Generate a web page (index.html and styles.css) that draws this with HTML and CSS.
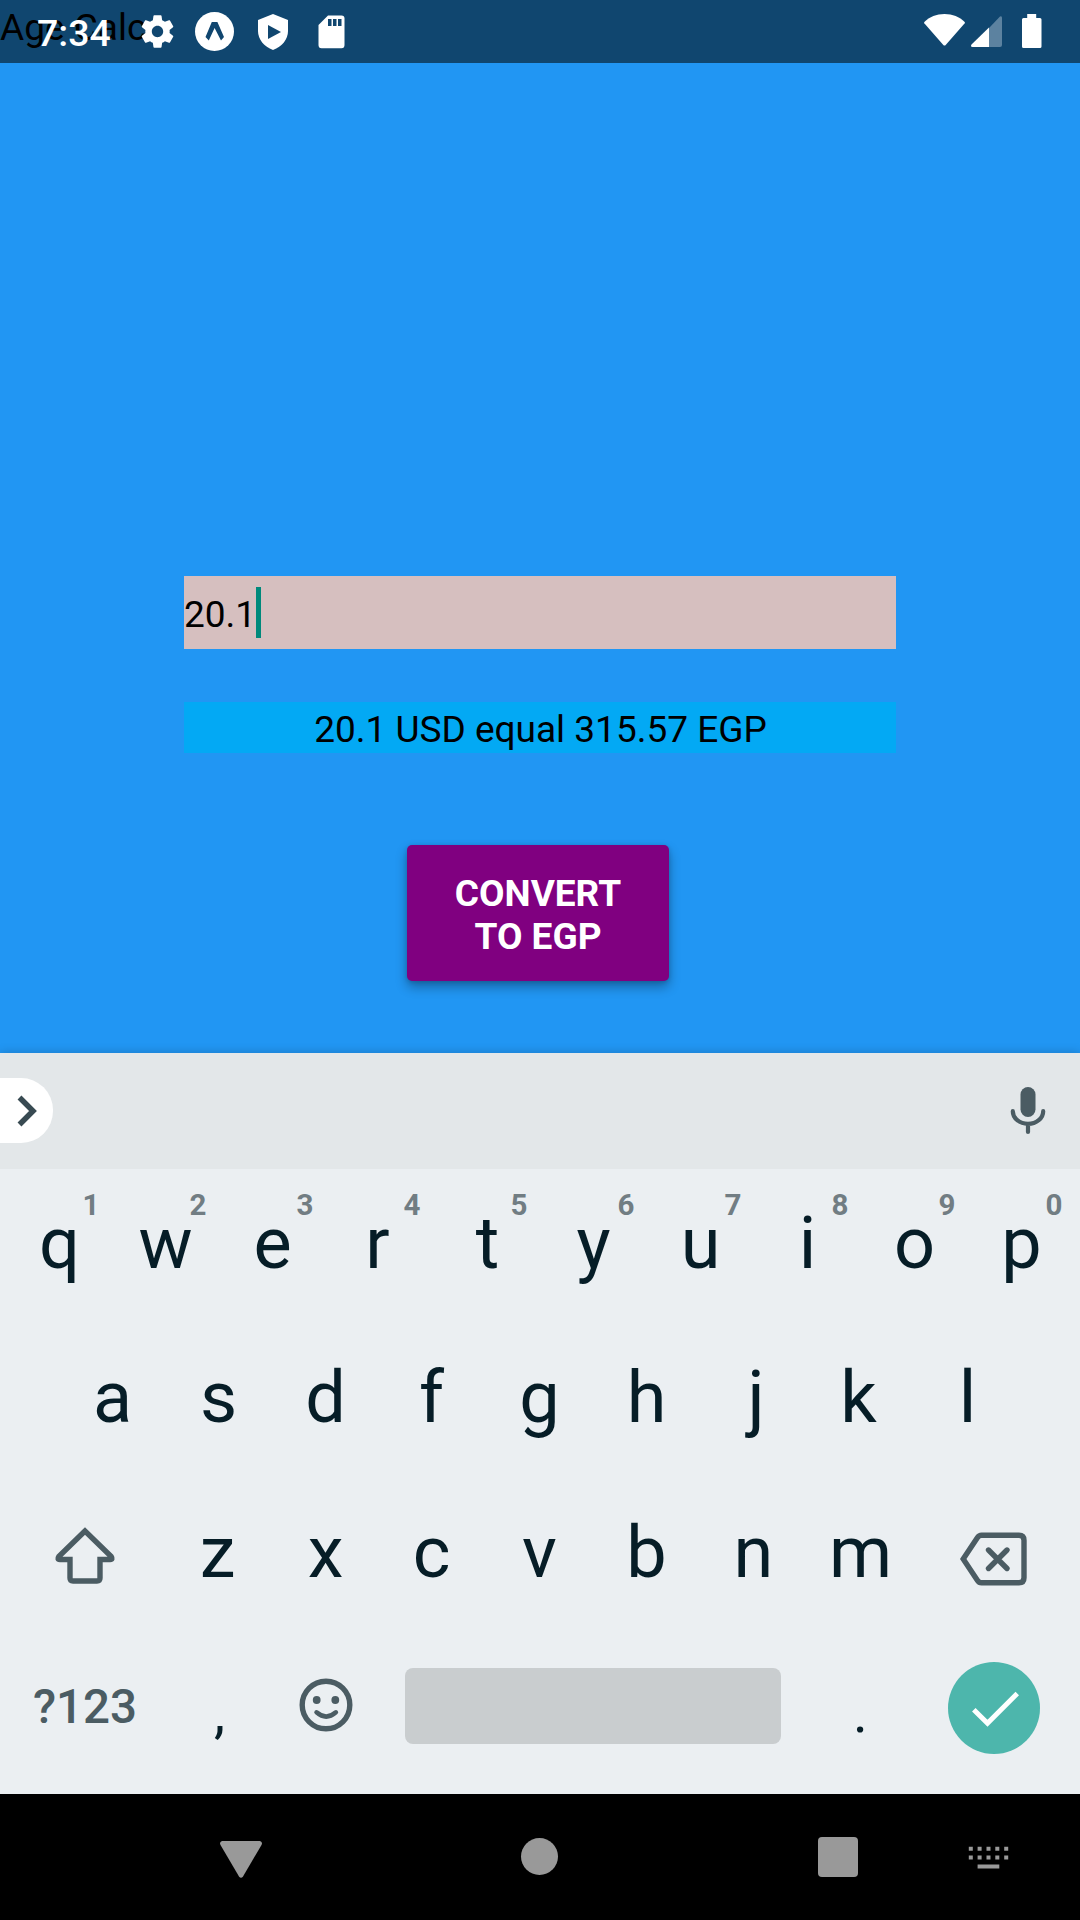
FILE: index.html
```html
<!DOCTYPE html>
<html lang="en">
<head>
<meta charset="utf-8">
<title>Age Calc</title>
<link rel="stylesheet" href="styles.css">
</head>
<body>
<div class="screen">
  <header class="status">
    <span class="time">7:34</span>
    <svg class="gear" width="39" height="39" viewBox="0 0 24 24"><path d="M19.43 12.98c.04-.32.07-.64.07-.98s-.03-.66-.07-.98l2.11-1.65c.19-.15.24-.42.12-.64l-2-3.46c-.12-.22-.39-.3-.61-.22l-2.49 1c-.52-.4-1.08-.73-1.69-.98l-.38-2.65C14.46 2.18 14.25 2 14 2h-4c-.25 0-.46.18-.49.42l-.38 2.65c-.61.25-1.17.59-1.69.98l-2.49-1c-.23-.09-.49 0-.61.22l-2 3.46c-.13.22-.07.49.12.64l2.11 1.65c-.04.32-.07.65-.07.98s.03.66.07.98l-2.11 1.65c-.19.15-.24.42-.12.64l2 3.46c.12.22.39.3.61.22l2.49-1c.52.4 1.08.73 1.69.98l.38 2.65c.03.24.24.42.49.42h4c.25 0 .46-.18.49-.42l.38-2.65c.61-.25 1.17-.59 1.69-.98l2.49 1c.23.09.49 0 .61-.22l2-3.46c.12-.22.07-.49-.12-.64l-2.11-1.65zM12 15.5c-1.93 0-3.5-1.57-3.5-3.5s1.57-3.500 3.500-3.500 3.500 1.570 3.500 3.500-1.570 3.500-3.500 3.500z"/></svg>
    <svg class="expo" width="39" height="39" viewBox="0 0 39 39"><circle cx="19.5" cy="19.5" r="19.5"/><path class="cut" d="M16.800 10h5.600l6.600 15-3 3.500-6.400-12.500-5.800 12.500-3.300-3.500z"/></svg>
    <svg class="shield" width="30" height="36" viewBox="0 0 30 36"><path d="M15 0l15 6v11c0 8.500-6 15.500-15 19C6 32.500 0 25.500 0 17V6z"/><path class="cut" d="M10 11v14l13-7z"/></svg>
    <svg class="sd" width="27" height="34" viewBox="0 0 27 34"><path d="M10 .5h13.500c2 0 3 1.200 3 3v26.500c0 2-1 3.300-3 3.300H3.500c-2 0-3-1.300-3-3.300V10z"/><path class="cut" d="M10 4h3.500v7H10zM15 4h3.500v7H15zM20 4h3.500v7H20z"/></svg>
    <svg class="wifi" width="41" height="32" viewBox="0 0 41 32"><path d="M.3 8C5.500 3 12.500.1 20.500.1S35.500 3 40.700 8c.3.400.3.900 0 1.300L21.700 31c-.7.700-1.700.7-2.400 0L.3 9.300c-.3-.4-.3-.9 0-1.300z"/></svg>
    <svg class="signal" width="31" height="31" viewBox="0 0 31 31"><path class="faint" d="M18 12L29 .5q2-1 2 1.500v27q0 2-2 2H18z"/><path d="M18 11.500V31H1.500Q-.8 31 .5 28.500z"/></svg>
    <svg class="battery" width="20" height="34" viewBox="0 0 20 34"><path d="M5.200 0h9v4H18q1.500 0 1.500 1.500v27Q19.500 34 18 34H1.500Q0 34 0 32.500v-27Q0 4 1.500 4h3.700z"/></svg>
  </header>

  <main class="app">
    <div class="title">Age Calc</div>
    <div class="field"><span>20.1</span><i class="caret"></i></div>
    <div class="result">20.1 USD equal 315.57 EGP</div>
    <button class="convert">CONVERT<br>TO EGP</button>
  </main>

  <section class="keyboard">
    <div class="strip">
      <div class="expand"><svg width="20" height="32" viewBox="0 0 20 32"><path class="chevron" d="M2.500 2.500L16 16 2.500 29.500"/></svg></div>
      <svg class="mic" width="36" height="48" viewBox="0 0 36 48"><rect x="10.500" y="0" width="15" height="30" rx="7.500"/><path class="line" d="M2.800 24.200a15.200 12.700 0 0 0 30.400 0M18 38v7"/></svg>
    </div>
    <div class="row row-1">
      <div class="key key-q">q<sup>1</sup></div><div class="key">w<sup>2</sup></div><div class="key">e<sup>3</sup></div><div class="key key-r">r<sup>4</sup></div><div class="key key-t">t<sup>5</sup></div><div class="key">y<sup>6</sup></div><div class="key">u<sup>7</sup></div><div class="key">i<sup>8</sup></div><div class="key">o<sup>9</sup></div><div class="key">p<sup>0</sup></div>
    </div>
    <div class="row row-2">
      <div class="key key-a">a</div><div class="key">s</div><div class="key">d</div><div class="key key-f">f</div><div class="key">g</div><div class="key">h</div><div class="key key-j">j</div><div class="key key-k">k</div><div class="key">l</div>
    </div>
    <div class="row row-3">
      <div class="key wide"><svg class="shift" width="62" height="58" viewBox="0 0 62 58"><path class="stroke" d="M31 4L4.800 29.500q-2 3 1 3H16V51q0 3 3 3h24q3 0 3-3V32.500h10.200q3 0 1-3z"/></svg></div>
      <div class="key key-z">z</div><div class="key">x</div><div class="key key-c">c</div><div class="key">v</div><div class="key">b</div><div class="key">n</div><div class="key">m</div>
      <div class="key wide"><svg class="erase" width="68" height="54" viewBox="0 0 68 54"><path class="stroke" d="M3.200 27L17.500 5.500Q19 3.200 21.500 3.200H59q5 0 5 5v37.600q0 5-5 5H21.500Q19 50.800 17.500 48.500z"/><path class="stroke round" d="M28.500 18l18.500 18.500M47 18L28.500 36.500"/></svg></div>
    </div>
    <div class="row row-4">
      <div class="key wide symbols">?123</div>
      <div class="key punct comma">,</div>
      <div class="key"><svg class="smile" width="54" height="54" viewBox="0 0 54 54"><circle class="stroke" cx="27" cy="27" r="23.800"/><circle cx="17.700" cy="22" r="3.900"/><circle cx="36.300" cy="22" r="3.900"/><path class="mouth" d="M17.500 34.300q9.700 8.500 19.400 0"/></svg></div>
      <div class="space"></div>
      <div class="key punct">.</div>
      <div class="key wide"><div class="enter"><svg width="48" height="36" viewBox="0 0 48 36"><path class="tick" d="M2.800 18.800L16.500 32.300 46.300 2.500"/></svg></div></div>
    </div>
  </section>

  <nav class="nav">
    <svg class="back" width="42" height="37" viewBox="0 0 42 37"><path d="M2 0h38q3 1 1.500 4L23 35.500q-2 2.500-4 0L.5 4Q-1 1 2 0z"/></svg>
    <i class="home"></i>
    <i class="recent"></i>
    <svg class="ime" width="42" height="24" viewBox="0 0 42 24"><path d="M.8.800h4v4h-4zM9.600.8h4v4h-4zM18.500.8h4v4h-4zM27.300.8h4v4h-4zM36.200.8h4v4h-4zM.8 9.600h4v4h-4zM9.600 9.600h4v4h-4zM18.500 9.600h4v4h-4zM27.300 9.600h4v4h-4zM36.200 9.600h4v4h-4zM9.600 18.500h21.700v4H9.600z"/></svg>
  </nav>
</div>
</body>
</html>
```
FILE: styles.css
```css
* { box-sizing: border-box; }
body { margin: 0; font-family: Roboto, sans-serif; }
svg { display: block; flex: none; }
.screen { position: relative; display: flex; flex-direction: column; width: 1080px; height: 1920px; overflow: hidden; background: #2196f3; }

/* system bar drawn over the app */
.status { position: absolute; z-index: 1; top: 0; left: 0; display: flex; align-items: flex-start; width: 100%; height: 63px; padding-left: 37px; color: #fff; fill: #fff; }
.time { width: 101px; margin-top: 11px; font-size: 37.5px; font-weight: 500; line-height: 44px; }
.gear { margin-top: 12px; }
.expo { margin: 12px 0 0 18px; }
.shield { margin: 14px 0 0 24px; }
.sd { margin: 15px 0 0 30px; }
.wifi { margin: 14px 0 0 auto; }
.signal { margin: 16px 0 0 6px; }
.battery { margin: 14px 38px 0 20px; }
.cut { fill: #10466f; }
.faint { fill: #5c82a0; }

.app { display: flex; flex-direction: column; align-items: center; height: 1053px; color: #000; font-size: 37px; }
.title { align-self: stretch; height: 63px; padding-top: 6px; background: #10466f; line-height: 44px; }
.field { display: flex; align-items: center; width: 712px; height: 73px; margin-top: 513px; background: #d6bfbf; }
.field span { padding-top: 4px; }
.caret { width: 5px; height: 51px; background: #00897b; }
.result { width: 712px; height: 51px; margin-top: 53px; padding-left: 1px; background: #03a9f4; line-height: 55px; text-align: center; }
.convert { width: 262px; height: 136px; margin: 92px 4px 0 0; padding: 4px 0 0; border: 0; border-radius: 5px; background: #800080; box-shadow: 0 6px 12px rgba(0, 0, 0, .32), 0 1px 4px rgba(0, 0, 0, .15); color: #fff; font: 700 37px/43px Roboto, sans-serif; }

.keyboard { height: 741px; background: #ebeff2; box-shadow: 0 0 10px rgba(0, 0, 0, .2); color: #061d27; fill: #4b5c63; }
.strip { display: flex; justify-content: space-between; height: 116px; padding: 25px 34px 0 0; background: #e3e7e9; }
.expand { display: flex; align-items: center; width: 53px; height: 65px; padding-left: 17px; border-radius: 0 32px 32px 0; background: #fff; }
.chevron { fill: none; stroke: #384a52; stroke-width: 5.5; }
.mic { margin-top: 9px; }
.line { fill: none; stroke: #4b5c63; stroke-width: 4.200; stroke-linecap: round; }
.row { display: flex; align-items: stretch; padding: 0 5px; font-size: 72px; }
.row-1 { height: 149px; }
.row-2 { height: 159px; padding: 0 58px; }
.row-3 { height: 151px; }
.row-4 { height: 160px; }
.key { position: relative; display: flex; align-items: center; justify-content: center; width: 107px; flex: none; }
.key.wide { width: 160px; }
.key sup { position: absolute; top: 19px; left: 66px; width: 40px; color: #717d83; font-size: 29.500px; font-weight: 700; line-height: 35px; text-align: center; }

/* optical centring of narrow and asymmetric letters */
.key-q, .key-t, .key-a { padding-left: 2px; }
.key-r, .key-k { padding-right: 4px; }
.key-f, .key-z, .key-c { padding-right: 2px; }
.key-j { padding-left: 5px; }
.comma { padding-left: 2px; }

.stroke { fill: none; stroke: #4b5c63; stroke-width: 5.4; }
.round { stroke-linecap: round; }
.shift { margin-top: 6px; }
.erase { margin-top: 12px; }
.symbols { padding-bottom: 2px; color: #4b5c63; font-size: 47.500px; font-weight: 500; }
.punct { padding-top: 9px; font-size: 56px; }
.smile { margin-top: -6px; }
.mouth { fill: none; stroke: #4b5c63; stroke-width: 4.500; stroke-linecap: round; }
.space { width: 376px; height: 76px; margin: 40px 26px 0; border-radius: 8px; background: #c9cdcf; }
.enter { display: flex; align-items: center; justify-content: center; width: 92px; height: 92px; padding: 2px 0 0 2px; border-radius: 50%; background: #4db6ac; }
.tick { fill: none; stroke: #fff; stroke-width: 5; }

.nav { display: flex; align-items: flex-start; height: 126px; padding: 43px 70px 0 220px; background: #000; fill: #999; }
.back { margin-top: 4px; }
.home { width: 37px; height: 37px; margin: 1px 0 0 259px; border-radius: 50%; background: #999; }
.recent { width: 40px; height: 40px; margin-left: 260px; border-radius: 4px; background: #999; }
.ime { margin: 9px 0 0 auto; }
```
